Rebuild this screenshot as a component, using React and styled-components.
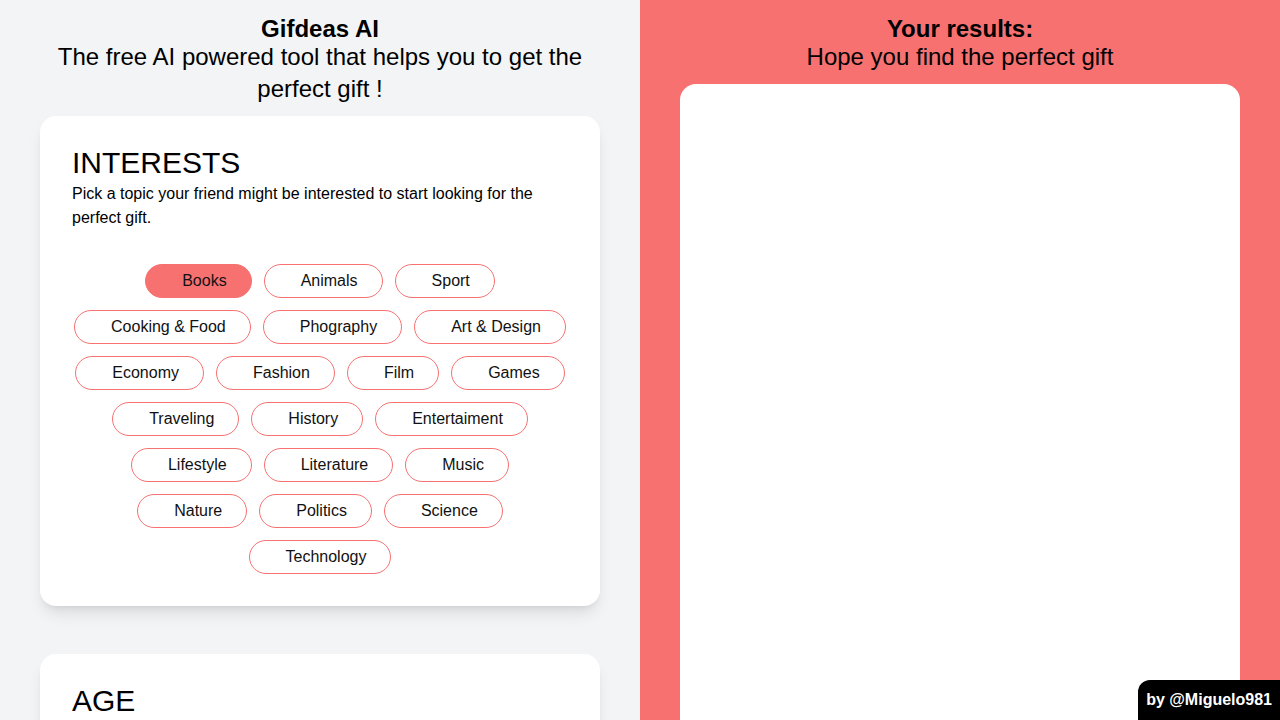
import React, { useState } from 'react';
import styled, { createGlobalStyle } from 'styled-components';

const GlobalStyle = createGlobalStyle`
    html, body {
        margin: 0;
        padding: 0;
        height: 100%;
        overflow: hidden;
    }
    body {
        font-family: "Liberation Sans", Arial, sans-serif;
        color: #000;
    }
    * {
        box-sizing: border-box;
    }
`;

const topics = [
    "Books", "Animals", "Sport", "Cooking & Food", "Phography", "Art & Design",
    "Economy", "Fashion", "Film", "Games", "Traveling", "History", "Entertaiment",
    "Lifestyle", "Literature", "Music", "Nature", "Politics", "Science", "Technology"
];

export default function App() {
    const [selected, setSelected] = useState("Books");

    return (
        <Page>
            <GlobalStyle />
            <LeftColumn>
                <Header>
                    <Title>Gifdeas AI</Title>
                    <Subtitle>The free AI powered tool that helps you to get the perfect gift !</Subtitle>
                </Header>
                <CardStack>
                    <Card>
                        <CardTitle>INTERESTS</CardTitle>
                        <CardText>Pick a topic your friend might be interested to start looking for the perfect gift.</CardText>
                        <Chips>
                            {topics.map(topic => (
                                <Chip
                                    key={topic}
                                    $active={topic === selected}
                                    onClick={() => setSelected(topic)}
                                >
                                    {topic}
                                </Chip>
                            ))}
                        </Chips>
                    </Card>
                    <Card>
                        <CardTitle>AGE</CardTitle>
                    </Card>
                </CardStack>
            </LeftColumn>
            <RightColumn>
                <Header>
                    <Title>Your results:</Title>
                    <Subtitle>Hope you find the perfect gift</Subtitle>
                </Header>
                <ResultsBox />
            </RightColumn>
            <Credit>by @Miguelo981</Credit>
        </Page>
    );
}

const Page = styled("div")`
    display: grid;
    grid-template-columns: 1fr 1fr;
    height: 100vh;
    overflow: hidden;
`;

const LeftColumn = styled("div")`
    background-color: #f3f4f6;
    padding: 0 40px;
    display: flex;
    flex-direction: column;
    overflow: hidden;
`;

const RightColumn = styled("div")`
    background-color: #f87171;
    padding: 0 40px;
    display: flex;
    flex-direction: column;
    overflow: hidden;
`;

const Header = styled("div")`
    text-align: center;
    padding-top: 16px;
    margin-bottom: 11px;
`;

const Title = styled("h1")`
    margin: 0;
    font-size: 24px;
    line-height: 25px;
    font-weight: 700;
`;

const Subtitle = styled("p")`
    margin: 0;
    font-size: 24px;
    line-height: 32px;
`;

const CardStack = styled("div")`
    display: flex;
    flex-direction: column;
    gap: 48px;
`;

const Card = styled("section")`
    background-color: white;
    border-radius: 16px;
    padding: 32px;
    box-shadow: 0 10px 15px -3px rgba(0, 0, 0, 0.1), 0 4px 6px -4px rgba(0, 0, 0, 0.1);
    flex-shrink: 0;
`;

const CardTitle = styled("h2")`
    margin: 0 0 4px;
    font-size: 30px;
    line-height: 30px;
    font-weight: 400;
`;

const CardText = styled("p")`
    margin: 0;
    font-size: 16px;
    line-height: 24px;
`;

const Chips = styled("div")`
    margin-top: 34px;
    display: flex;
    flex-wrap: wrap;
    justify-content: center;
    gap: 12px;
`;

const Chip = styled("button")`
    font-family: inherit;
    font-size: 16px;
    line-height: 24px;
    color: #111;
    background-color: ${props => props.$active ? "#f87171" : "white"};
    border: 1px solid #f87171;
    border-radius: 9999px;
    padding: 4px 24px 4px 36px;
    cursor: pointer;
`;

const ResultsBox = styled("div")`
    background-color: white;
    border-radius: 16px;
    flex: 1;
    min-height: 700px;
`;

const Credit = styled("div")`
    position: fixed;
    right: 0;
    bottom: 0;
    background-color: black;
    color: white;
    font-weight: 700;
    font-size: 16px;
    line-height: 24px;
    padding: 8px 8px;
    border-top-left-radius: 12px;
`;
